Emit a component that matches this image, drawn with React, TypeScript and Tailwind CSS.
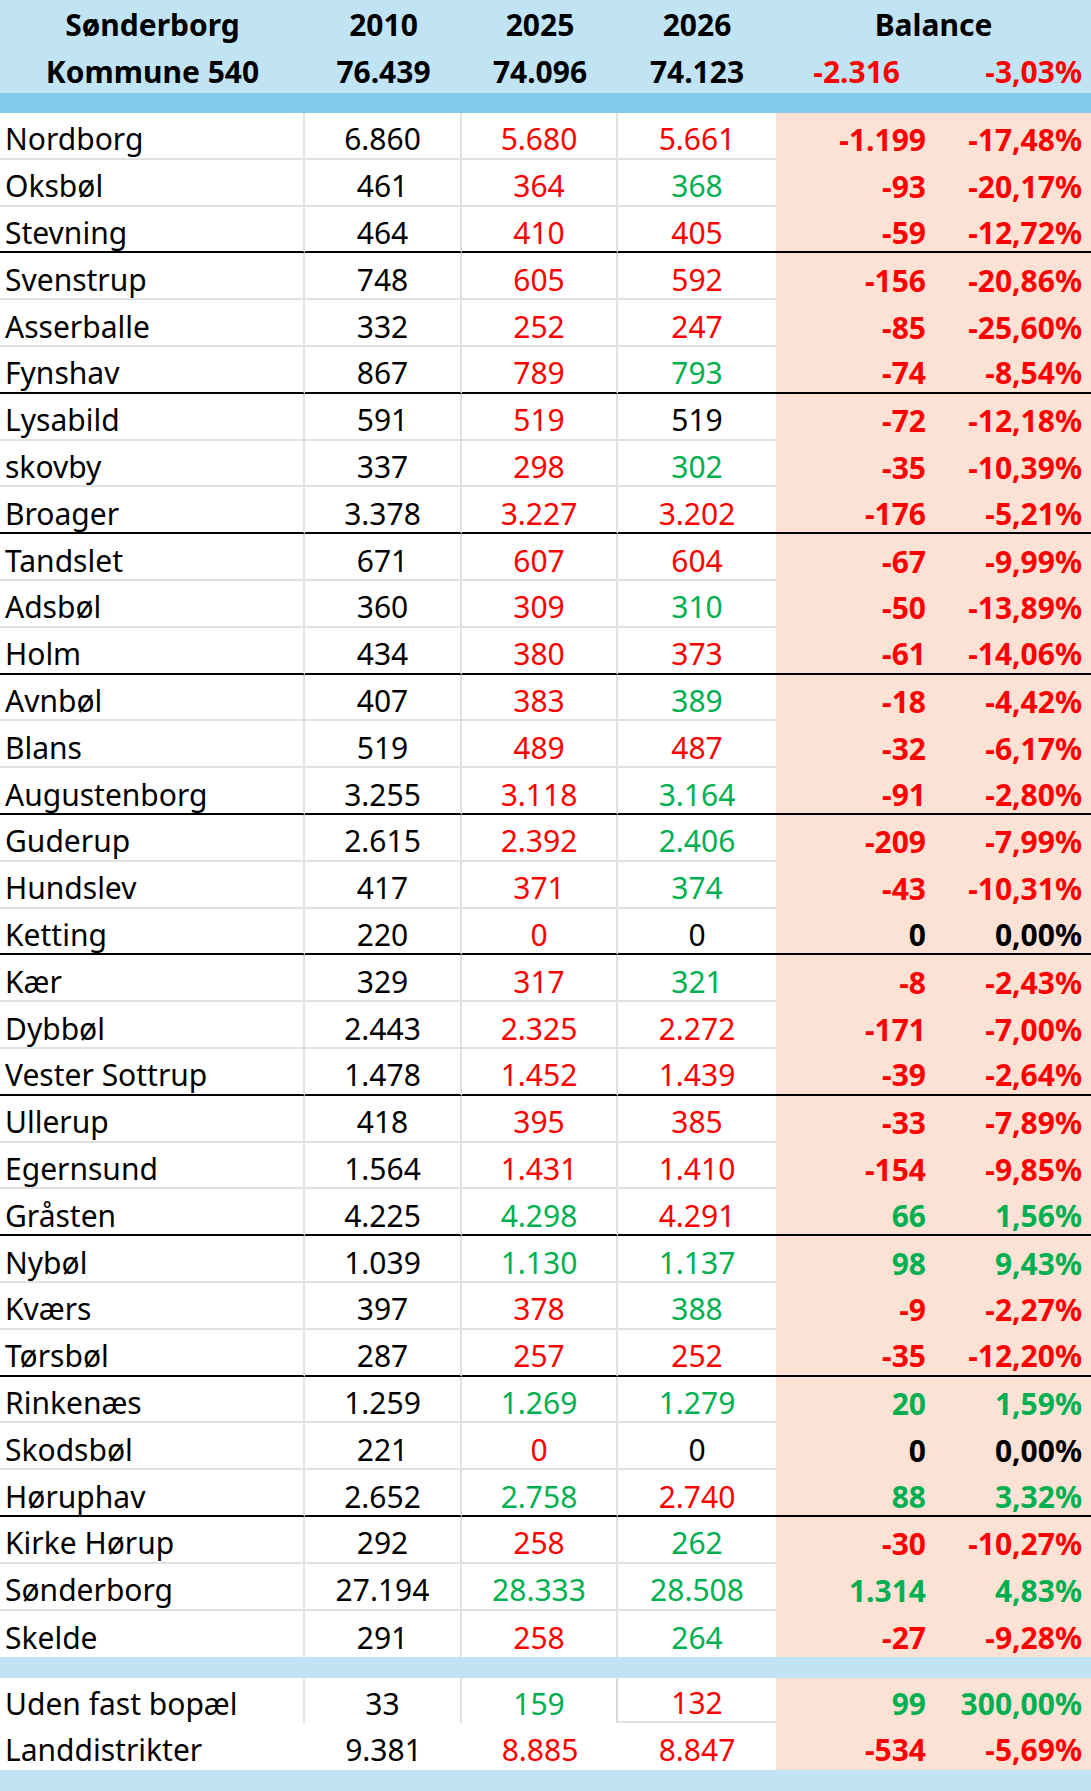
import React from "react";

type C = "k" | "r" | "g";
type Row = [string, string, string, C, string, C, string, string, C];

const rows: Row[] = [
  ["Nordborg", "6.860", "5.680", "r", "5.661", "r", "-1.199", "-17,48%", "r"],
  ["Oksbøl", "461", "364", "r", "368", "g", "-93", "-20,17%", "r"],
  ["Stevning", "464", "410", "r", "405", "r", "-59", "-12,72%", "r"],
  ["Svenstrup", "748", "605", "r", "592", "r", "-156", "-20,86%", "r"],
  ["Asserballe", "332", "252", "r", "247", "r", "-85", "-25,60%", "r"],
  ["Fynshav", "867", "789", "r", "793", "g", "-74", "-8,54%", "r"],
  ["Lysabild", "591", "519", "r", "519", "k", "-72", "-12,18%", "r"],
  ["skovby", "337", "298", "r", "302", "g", "-35", "-10,39%", "r"],
  ["Broager", "3.378", "3.227", "r", "3.202", "r", "-176", "-5,21%", "r"],
  ["Tandslet", "671", "607", "r", "604", "r", "-67", "-9,99%", "r"],
  ["Adsbøl", "360", "309", "r", "310", "g", "-50", "-13,89%", "r"],
  ["Holm", "434", "380", "r", "373", "r", "-61", "-14,06%", "r"],
  ["Avnbøl", "407", "383", "r", "389", "g", "-18", "-4,42%", "r"],
  ["Blans", "519", "489", "r", "487", "r", "-32", "-6,17%", "r"],
  ["Augustenborg", "3.255", "3.118", "r", "3.164", "g", "-91", "-2,80%", "r"],
  ["Guderup", "2.615", "2.392", "r", "2.406", "g", "-209", "-7,99%", "r"],
  ["Hundslev", "417", "371", "r", "374", "g", "-43", "-10,31%", "r"],
  ["Ketting", "220", "0", "r", "0", "k", "0", "0,00%", "k"],
  ["Kær", "329", "317", "r", "321", "g", "-8", "-2,43%", "r"],
  ["Dybbøl", "2.443", "2.325", "r", "2.272", "r", "-171", "-7,00%", "r"],
  ["Vester Sottrup", "1.478", "1.452", "r", "1.439", "r", "-39", "-2,64%", "r"],
  ["Ullerup", "418", "395", "r", "385", "r", "-33", "-7,89%", "r"],
  ["Egernsund", "1.564", "1.431", "r", "1.410", "r", "-154", "-9,85%", "r"],
  ["Gråsten", "4.225", "4.298", "g", "4.291", "r", "66", "1,56%", "g"],
  ["Nybøl", "1.039", "1.130", "g", "1.137", "g", "98", "9,43%", "g"],
  ["Kværs", "397", "378", "r", "388", "g", "-9", "-2,27%", "r"],
  ["Tørsbøl", "287", "257", "r", "252", "r", "-35", "-12,20%", "r"],
  ["Rinkenæs", "1.259", "1.269", "g", "1.279", "g", "20", "1,59%", "g"],
  ["Skodsbøl", "221", "0", "r", "0", "k", "0", "0,00%", "k"],
  ["Høruphav", "2.652", "2.758", "g", "2.740", "r", "88", "3,32%", "g"],
  ["Kirke Hørup", "292", "258", "r", "262", "g", "-30", "-10,27%", "r"],
  ["Sønderborg", "27.194", "28.333", "g", "28.508", "g", "1.314", "4,83%", "g"],
  ["Skelde", "291", "258", "r", "264", "g", "-27", "-9,28%", "r"],
];

const col = (c: C) =>
  c === "r" ? "text-[#ff0000]" : c === "g" ? "text-[#00b050]" : "text-black";

const GRID = "grid grid-cols-[305px_157px_156px_158px_164px_151px]";

function DataRow({ r, idx }: { r: Row; idx: number }) {
  const last = idx === rows.length - 1;
  const groupEnd = !last && idx % 3 === 2;
  const bb = last
    ? ""
    : groupEnd
    ? "border-b-2 border-b-black"
    : "border-b-2 border-b-[#e1e1e1]";
  const bbP = last ? "" : groupEnd ? "border-b-2 border-b-black" : "";
  return (
    <div className={`${GRID} h-[46.8px]`}>
      <div className={`flex items-center pl-[5px] pt-[8px] bg-white border-r-2 border-r-[#e1e1e1] ${bb}`}>
        {r[0]}
      </div>
      <div className={`flex items-center justify-center pt-[8px] bg-white border-r-2 border-r-[#e1e1e1] ${bb}`}>
        {r[1]}
      </div>
      <div className={`flex items-center justify-center pt-[8px] bg-white border-r-2 border-r-[#e1e1e1] ${bb} ${col(r[3])}`}>
        {r[2]}
      </div>
      <div className={`flex items-center justify-center pt-[8px] bg-white ${bb} ${col(r[5])}`}>
        {r[4]}
      </div>
      <div className={`flex items-center justify-end pr-[14px] pt-[8px] bg-[#fbe2d5] font-bold ${bbP} ${col(r[8])}`}>
        {r[6]}
      </div>
      <div className={`flex items-center justify-end pr-[9px] pt-[8px] bg-[#fbe2d5] font-bold ${bbP} ${col(r[8])}`}>
        {r[7]}
      </div>
    </div>
  );
}

export default function App() {
  return (
    <div className="w-[1091px] h-[1791px] bg-white overflow-hidden [font-family:'Noto_Sans','Open_Sans',sans-serif] text-[30px] leading-none text-black">
      {/* Header */}
      <div className="bg-[#c1e4f5] font-bold">
        <div className={`${GRID} h-[47px]`}>
          <div className="flex items-center justify-center pt-[3px]">Sønderborg</div>
          <div className="flex items-center justify-center pt-[3px]">2010</div>
          <div className="flex items-center justify-center pt-[3px]">2025</div>
          <div className="flex items-center justify-center pt-[3px]">2026</div>
          <div className="col-span-2 flex items-center justify-center pt-[3px]">Balance</div>
        </div>
        <div className={`${GRID} h-[46px]`}>
          <div className="flex items-center justify-center pt-[4px]">Kommune 540</div>
          <div className="flex items-center justify-center pt-[4px]">76.439</div>
          <div className="flex items-center justify-center pt-[4px]">74.096</div>
          <div className="flex items-center justify-center pt-[4px]">74.123</div>
          <div className="flex items-center justify-end pr-[40px] pt-[4px] text-[#ff0000]">-2.316</div>
          <div className="flex items-center justify-end pr-[9px] pt-[4px] text-[#ff0000]">-3,03%</div>
        </div>
      </div>
      <div className="h-[20px] bg-[#83cbeb]" />

      {rows.map((r, i) => (
        <DataRow key={i} r={r} idx={i} />
      ))}

      <div className="h-[21px] bg-[#c1e4f5]" />

      {/* Uden fast bopæl */}
      <div className={`${GRID} h-[45px]`}>
        <div className="flex items-center pl-[5px] pt-[6px] bg-white border-r-2 border-r-[#e1e1e1]">Uden fast bopæl</div>
        <div className="flex items-center justify-center pt-[6px] bg-white border-r-2 border-r-[#e1e1e1]">33</div>
        <div className="flex items-center justify-center pt-[6px] bg-white border-r-2 border-r-[#d9d9d9] text-[#00b050]">159</div>
        <div className="flex items-center justify-center pt-[6px] bg-white border-b-2 border-b-[#e1e1e1] text-[#ff0000]">132</div>
        <div className="flex items-center justify-end pr-[14px] pt-[6px] bg-[#fbe2d5] font-bold text-[#00b050]">99</div>
        <div className="flex items-center justify-end pr-[9px] pt-[6px] bg-[#fbe2d5] font-bold text-[#00b050]">300,00%</div>
      </div>
      {/* Landdistrikter */}
      <div className={`${GRID} h-[47px]`}>
        <div className="flex items-center pl-[5px] pt-[6px] bg-white">Landdistrikter</div>
        <div className="flex items-center justify-center pt-[6px] bg-white">9.381</div>
        <div className="flex items-center justify-center pt-[6px] bg-white text-[#ff0000]">8.885</div>
        <div className="flex items-center justify-center pt-[6px] bg-white text-[#ff0000]">8.847</div>
        <div className="flex items-center justify-end pr-[14px] pt-[6px] bg-[#fbe2d5] font-bold text-[#ff0000]">-534</div>
        <div className="flex items-center justify-end pr-[9px] pt-[6px] bg-[#fbe2d5] font-bold text-[#ff0000]">-5,69%</div>
      </div>
      <div className="h-[21px] bg-[#c1e4f5]" />
    </div>
  );
}
